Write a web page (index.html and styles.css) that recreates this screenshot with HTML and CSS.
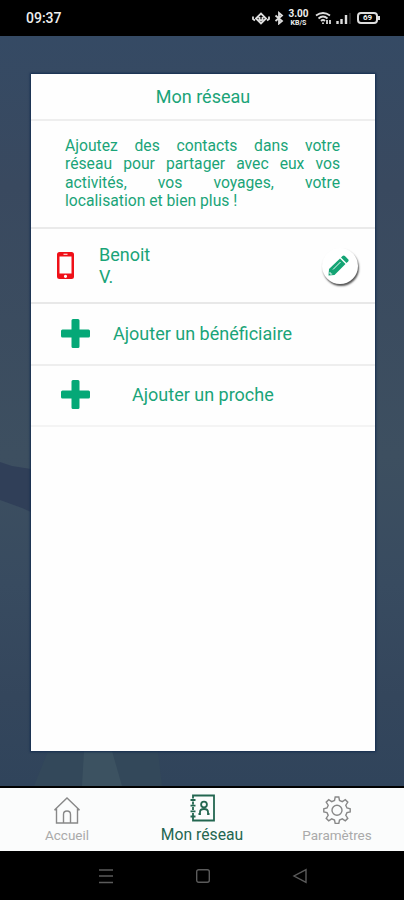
FILE: index.html
```html
<!DOCTYPE html>
<html lang="fr">
<head>
<meta charset="utf-8">
<title>Mon réseau</title>
<link rel="stylesheet" href="styles.css">
</head>
<body>
<div class="phone">
  <header class="status">
    <span class="clock">09:37</span>
    <div class="status-icons">
      <svg class="eye" width="18" height="14" viewBox="0 0 18 14"><path d="M1 5.500v2.500l2 1.500M17 5.500v2.500l-2 1.500M4 7.500l5-5 5 5-5 5zM7.500 6v2.500l1.500 1 1.500-1V6"/></svg>
      <svg class="bt" width="10" height="14" viewBox="0 0 10 14"><path d="M1.500 4.500l6.500 5.500L5 12.500V2l3 2.500-6.500 5.500"/></svg>
      <div class="speed"><span class="rate">3.00</span><span class="unit">KB/S</span></div>
      <svg class="wifi" width="17" height="14" viewBox="0 0 17 14"><path d="M1 4.500q7-5 14 0M3.500 7.500q4.500-4 9 0M6 10q2-2 4 0M8 11.500v1.500M12 9v4M15 9v4"/></svg>
      <svg class="signal" width="16" height="14" viewBox="0 0 16 14"><path d="M1.500 13v-3M5.500 13V8M10 13V4"/><path class="dim" d="M14 13V2"/></svg>
      <div class="battery"><span>69</span></div>
    </div>
  </header>

  <main class="backdrop">
    <svg class="scenery" width="404" height="750" viewBox="0 0 404 750" preserveAspectRatio="none">
      <path fill="#303f58" d="M0 426l12 4 19 3v43L22 472 0 464z"/>
      <path fill="#33485a" d="M48 715h110l4 35H34z"/>
      <path fill="#3c5261" d="M84 715h28l10 35H82z"/>
    </svg>
    <section class="card">
      <h1 class="title">Mon réseau</h1>
      <p class="intro">
        <span class="line">Ajoutez des contacts dans votre</span>
        <span class="line">réseau pour partager avec eux vos</span>
        <span class="line">activités, vos voyages, votre</span>
        <span class="line last">localisation et bien plus !</span>
      </p>
      <div class="contact">
        <svg class="mobile" width="17" height="27" viewBox="0 0 17 27"><path fill="#ef1018" fill-rule="evenodd" d="M2.500 0h12A2.500 2.500 0 0 1 17 2.500v22a2.500 2.500 0 0 1-2.500 2.500h-12A2.500 2.500 0 0 1 0 24.500v-22A2.500 2.500 0 0 1 2.500 0zM2.500 4.500v17h12v-17zM6.500 1.800v1h4v-1zM8.500 22.700a1.600 1.600 0 1 0 0 3.200a1.600 1.600 0 0 0 0-3.200z"/></svg>
        <div class="name">Benoit<br>V.</div>
        <button class="edit" aria-label="Modifier">
          <svg width="21" height="21" viewBox="0 0 21 21"><path fill="#14a474" d="M1 14L12 3.500l5.500 5.500L6.500 20 .5 20.500z"/><path fill="#14a474" d="M13 2.500l1.500-1.500q1.200-1 2.400 0l3.200 3.200q1 1.200 0 2.300L18.500 8z"/><path d="M2 17v2h2.200M5 14.500L12.500 7" fill="none" stroke="#fff" stroke-width=".9"/></svg>
        </button>
      </div>
      <div class="add">
        <svg class="plus" width="29" height="29" viewBox="0 0 29 29"><path d="M12 0h5q1.500 0 1.500 1.500v9h9q1.500 0 1.500 1.500v5q0 1.500-1.500 1.500h-9v9q0 1.500-1.500 1.500h-5q-1.500 0-1.500-1.500v-9h-9Q0 18.500 0 17v-5q0-1.500 1.500-1.500h9v-9Q10.500 0 12 0z"/></svg>
        <span class="label first">Ajouter un bénéficiaire</span>
      </div>
      <div class="add faint">
        <svg class="plus" width="29" height="29" viewBox="0 0 29 29"><path d="M12 0h5q1.500 0 1.500 1.500v9h9q1.500 0 1.500 1.500v5q0 1.500-1.500 1.500h-9v9q0 1.500-1.500 1.500h-5q-1.500 0-1.500-1.500v-9h-9Q0 18.500 0 17v-5q0-1.500 1.500-1.500h9v-9Q10.500 0 12 0z"/></svg>
        <span class="label second">Ajouter un proche</span>
      </div>
    </section>
  </main>

  <nav class="tabs">
    <a class="tab">
      <svg width="28" height="28" viewBox="0 0 28 28"><path d="M1.500 14L14 2 26.500 14l-2-1v14h-21V13zM10.500 27v-8.500q0-3.500 3.500-3.500t3.500 3.500V27"/></svg>
      <span class="accueil">Accueil</span>
    </a>
    <a class="tab active">
      <svg width="28" height="28" viewBox="0 0 28 28"><path d="M5 4.500V1.500h21v25H5v-3M5 7.500v3M5 13v3M5 19v2.500M2.500 6h5M2.500 11.700h5M2.500 17.300h5M2.500 22.500h5"/><circle cx="16" cy="10.500" r="2.900"/><path d="M10.500 20h1.500v-2q0-3 4-3t4 3v2h1.500"/></svg>
      <span class="reseau">Mon réseau</span>
    </a>
    <a class="tab">
      <svg width="28" height="28" viewBox="0 0 28 28"><path d="M11.500 4.500L12.200 1h3.600l.7 3.500 2.800 1.200 3-2 2.500 2.500-2 3L24 12l3.200.7v3.200L24 16.600l-1.200 2.700 2 3-2.500 2.500-3-2-2.800 1.200-.7 3.400h-3.600l-.7-3.400-2.800-1.200-3 2-2.500-2.500 2-3L4 16.600l-3.200-.7v-3.200L4 12l1.200-2.800-2-3 2.500-2.500 3 2z"/><circle cx="14" cy="14.300" r="5"/></svg>
      <span class="params">Paramètres</span>
    </a>
  </nav>
  <footer class="system">
    <svg width="16" height="16" viewBox="0 0 16 16"><path d="M1 2h14M1 8h14M1 14.500h14"/></svg>
    <svg width="16" height="16" viewBox="0 0 16 16"><rect x="1.700" y="1.700" width="12.600" height="12.600" rx="2"/></svg>
    <svg width="16" height="16" viewBox="0 0 16 16"><path d="M14 1.700v12.600L2 8z"/></svg>
  </footer>
</div>
</body>
</html>
```
FILE: styles.css
```css
* { box-sizing: border-box; }
body { margin: 0; font-family: Roboto, "Liberation Sans", sans-serif; }
svg { display: block; flex: none; fill: none; }
.phone { width: 404px; height: 900px; display: flex; flex-direction: column; overflow: hidden; background: #000; }

.status { height: 36px; flex: none; display: flex; align-items: center; justify-content: space-between; padding: 0 24px 0 26px; background: #000; color: #eee; }
.clock { font: 500 14px/18px Roboto, sans-serif; }
.status-icons { display: flex; align-items: center; }
.status-icons svg { stroke: #ddd; stroke-width: 1.8; }
.bt { margin-left: 4px; }
.speed { width: 21px; margin-left: 4px; display: flex; flex-direction: column; align-items: center; }
.rate { font: 700 10px/10px Roboto, sans-serif; }
.unit { font: 700 7px/8px Roboto, sans-serif; }
.wifi { margin-left: 6px; }
.status-icons .signal { margin-left: 4px; stroke-width: 2.4; }
.status-icons .dim { stroke: #333; stroke-width: 1.5; }
.battery { position: relative; width: 21px; height: 12px; margin: 0 2px 0 5px; border: 2px solid #ddd; border-radius: 4px; font: 700 8px/8px Roboto, sans-serif; text-align: center; }
.battery::after { content: ""; position: absolute; right: -4px; top: 2px; width: 2px; height: 4px; background: #ddd; }

.backdrop { position: relative; flex: none; height: 750px; padding: 38px 29px 0 31px; background: linear-gradient(180deg, #354a64 0, #39495f 20%, #3d4f60 56%, #384b60 73%, #34465c 88%, #30445b 100%); }
.scenery { position: absolute; left: 0; top: 0; }
.card { position: relative; height: 677px; background: #fefefe; color: #1aa478; box-shadow: 0 0 2px 1px #142c50; }
.title { margin: 0; height: 47px; padding-top: 12px; border-bottom: 2px solid #eee; font-size: 18px; line-height: 22px; font-weight: 400; text-align: center; }
.intro { margin: 0; height: 108px; padding: 16px 35px 0 34px; border-bottom: 2px solid #eaeaea; font-size: 15.700px; line-height: 18.300px; }
.line { display: block; white-space: nowrap; text-align: justify; text-align-last: justify; }
.last { text-align-last: left; }
.contact { display: flex; height: 75px; padding: 0 17px 0 26px; border-bottom: 2px solid #e8e8e8; align-items: center; }
.name { flex: 1; margin-left: 25px; font-size: 18px; line-height: 22px; }
.edit { width: 36px; height: 36px; display: flex; align-items: center; justify-content: center; padding: 0 3px 0 0; border: 0; border-radius: 50%; background: #fff; box-shadow: 1px 2px 2px #555; }
.add { display: flex; height: 62px; align-items: center; padding: 0 0 1px 30px; border-bottom: 2px solid #eee; }
.faint { height: 61px; padding-bottom: 2px; border-color: #f4f4f4; }
.plus { fill: #05a877; }
.label { font-size: 18px; line-height: 22px; padding-top: 1px; }
.first { margin-left: 23px; }
.second { margin-left: 42px; }

.tabs { flex: none; height: 63px; display: flex; justify-content: space-between; padding: 8px 0 0; background: #fbfcfc; margin-top: 2px; }
.tab { width: 134px; display: flex; flex-direction: column; align-items: center; color: #aaa; font-size: 13.500px; line-height: 18px; }
.tab svg { stroke: #888; stroke-width: 1.4; }
.tab span { margin-top: 2px; }
.active { color: #236650; font-size: 15.700px; }
.tab.active svg { margin-top: -2px; margin-bottom: 2px; stroke: #236650; stroke-width: 1.8; }
.system { flex: 1; display: flex; align-items: center; justify-content: center; gap: 81px; padding-left: 1px; }
.system svg { stroke: #5b5b5b; stroke-width: 1.4; }
```
